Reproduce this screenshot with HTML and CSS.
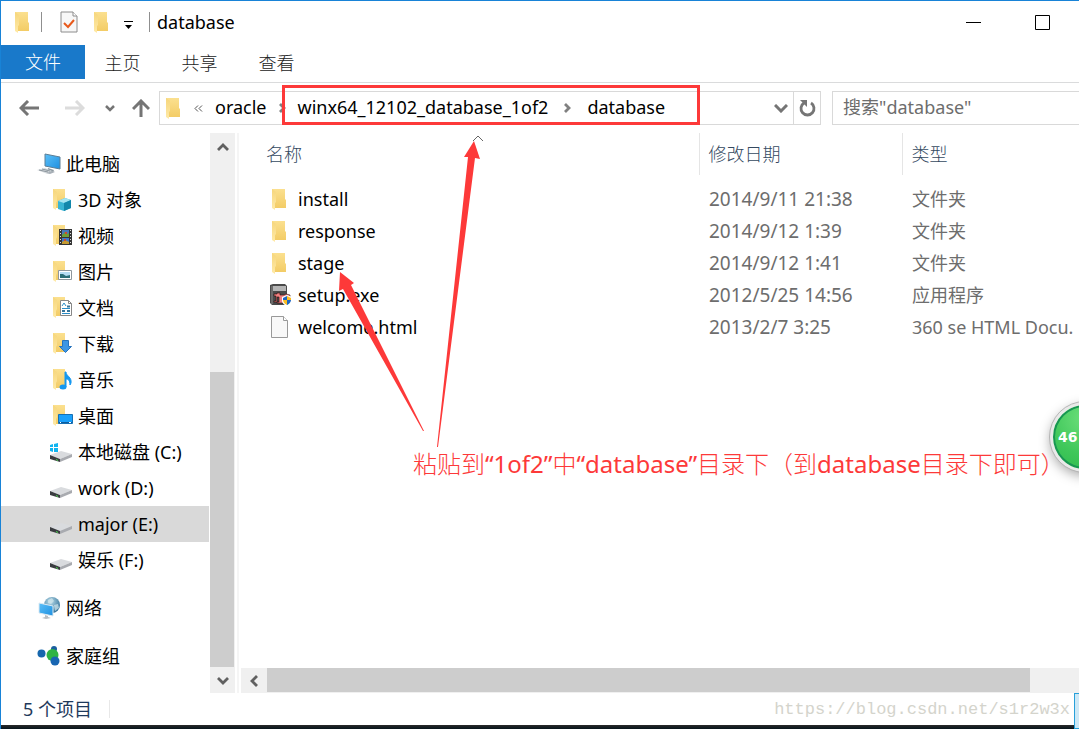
FILE: index.html
```html
<!DOCTYPE html>
<html lang="zh-CN">
<head>
    <meta charset="UTF-8">
    <meta name="viewport" content="width=device-width, initial-scale=1.0">
    <title>database</title>
    <link rel="stylesheet" href="styles.css">
</head>
<body>
    <svg class="defs" aria-hidden="true">
        <defs>
            <linearGradient id="gBack" x1="0" y1="0" x2="0" y2="1">
                <stop offset="0" stop-color="#fbe08f"/><stop offset="1" stop-color="#f3cc66"/>
            </linearGradient>
            <linearGradient id="gFront" x1="0" y1="0" x2="0" y2="1">
                <stop offset="0" stop-color="#f6d67c"/><stop offset="1" stop-color="#ffeaa8"/>
            </linearGradient>
            <linearGradient id="gScreen" x1="0" y1="0" x2="1" y2="1">
                <stop offset="0" stop-color="#5cc0f8"/><stop offset="1" stop-color="#1e8fe0"/>
            </linearGradient>
            <radialGradient id="gGlobe" cx="0.4" cy="0.3" r="0.8">
                <stop offset="0" stop-color="#b9dcea"/><stop offset="1" stop-color="#23658f"/>
            </radialGradient>
            <symbol id="folder" viewBox="0 0 16 22">
                <path d="M1 1h13v10l1 1v8H1z" fill="url(#gBack)"/>
                <path d="M1 1l4 3v10l-1 1v7l-3-2z" fill="url(#gFront)"/>
            </symbol>
            <symbol id="half" viewBox="0 0 24 24">
                <path d="M4 1h12v19H4z" fill="url(#gBack)"/>
                <path d="M4 1l4 3v9l-1 2v7l-3-2z" fill="url(#gFront)"/>
            </symbol>
            <symbol id="drive" viewBox="0 0 24 24">
                <path d="M1 15l11-4 11 3-12 5z" fill="#d9dbde"/>
                <path d="M1 15l10 4v3L1 19z" fill="#3a3c40"/>
                <path d="M11 19l12-5v3l-12 5z" fill="#a9abb0"/>
                <path d="M7 19l2 1v1l-2-1z" fill="#4bd84b"/>
            </symbol>
        </defs>
    </svg>

    <div class="window">
        <header class="titlebar">
            <svg class="folder"><use href="#folder"/></svg>
            <i class="sep first"></i>
            <button class="quick" aria-label="属性">
                <svg width="18" height="22" viewBox="0 0 18 22">
                    <path d="M1 1h12l4 4v16H1z" fill="#f7f7f7" stroke="#8c8c8c"/>
                    <path d="M13 1v4h4" fill="#fff" stroke="#8c8c8c"/>
                    <path d="M4 12l4 4 6-7" fill="none" stroke="#e8591b" stroke-width="2"/>
                </svg>
            </button>
            <button class="quick second" aria-label="新建文件夹"><svg class="folder"><use href="#folder"/></svg></button>
            <button class="quick more" aria-label="自定义快速访问工具栏">
                <svg width="10" height="9" viewBox="0 0 10 9"><path d="M0 0h9v1H0zM1 4h7L4.500 8z" fill="#000"/></svg>
            </button>
            <i class="sep"></i>
            <h1>database</h1>
            <div class="controls">
                <button aria-label="最小化"><svg width="15" height="15"><path d="M0 7h15v1H0z"/></svg></button>
                <button aria-label="最大化"><svg width="15" height="15"><path d="M.5.5h14v14H.5z" fill="none" stroke="#000"/></svg></button>
            </div>
        </header>

        <nav class="tabs">
            <button class="file">文件</button>
            <button>主页</button>
            <button>共享</button>
            <button>查看</button>
        </nav>

        <div class="navbar">
            <button class="go" aria-label="后退"><svg width="20" height="16" viewBox="0 0 20 16"><path d="M20 8H2M9 1L2 8l7 7" fill="none" stroke="#757575" stroke-width="3"/></svg></button>
            <button class="go" aria-label="前进"><svg width="20" height="16" viewBox="0 0 20 16"><path d="M0 8h18M11 1l7 7-7 7" fill="none" stroke="#dcdcdc" stroke-width="3"/></svg></button>
            <button class="recent" aria-label="最近位置"><svg width="10" height="7" viewBox="0 0 10 7"><path d="M1 1l4 4 4-4" fill="none" stroke="#757575" stroke-width="2.500"/></svg></button>
            <button class="up" aria-label="上移"><svg width="18" height="18" viewBox="0 0 18 18"><path d="M9 18V2M1 10l8-8 8 8" fill="none" stroke="#757575" stroke-width="3"/></svg></button>
            <div class="address">
                <svg class="folder"><use href="#folder"/></svg>
                <button class="crumb-sep back" aria-label="上级"><svg width="9" height="7" viewBox="0 0 9 7"><path d="M4 .5l-3 3 3 3M8 .5l-3 3 3 3" fill="none" stroke="#555"/></svg></button>
                <a href="#">oracle</a>
                <span class="crumb-sep"><svg width="7" height="10" viewBox="0 0 7 10"><path d="M1 1l4 4-4 4" fill="none" stroke="#808080" stroke-width="2.800"/></svg></span>
                <a href="#">winx64_12102_database_1of2</a>
                <span class="crumb-sep last"><svg width="7" height="10" viewBox="0 0 7 10"><path d="M1 1l4 4-4 4" fill="none" stroke="#808080" stroke-width="2.800"/></svg></span>
                <a href="#">database</a>
                <button class="drop" aria-label="历史"><svg width="14" height="9" viewBox="0 0 14 9"><path d="M1 1l6 6 6-6" fill="none" stroke="#757575" stroke-width="3"/></svg></button>
                <button class="refresh" aria-label="刷新">
                    <svg width="17" height="18" viewBox="0 0 17 18"><path d="M12 4a6.500 6.500 0 1 1-7 0" fill="none" stroke="#757575" stroke-width="2.800"/><path d="M1 1h7v7l-2.500-2.500z" fill="#757575"/></svg>
                </button>
            </div>
            <input class="search" type="text" placeholder='搜索"database"' aria-label="搜索">
        </div>

        <div class="main">
            <nav class="tree">
                <ul>
                    <li><a class="root" href="#"><svg viewBox="0 0 24 24">
                        <path d="M8 2l15 3v12L8 14z" fill="url(#gScreen)" stroke="#5d7f96"/>
                        <path d="M11 16l6 2-1 2-6-1z" fill="#8c98a0"/>
                        <path d="M0 18l8-2 7 3-7 2z" fill="#d5dade"/><path d="M8 21l8-2 2 1-5 2z" fill="#a8b0b7"/>
                        <path d="M2 18l9 2M5 17l8 2" stroke="#8d969d"/></svg>此电脑</a></li>
                    <li><a href="#"><svg viewBox="0 0 24 24"><use href="#half"/>
                        <path d="M9 13l7-3 6 2v8l-7 3-6-2z" fill="#39b5d4"/><path d="M9 13l7-3 6 2-7 3z" fill="#a4e4f1"/><path d="M15 15l7-3v8l-7 3z" fill="#1287ab"/></svg>3D 对象</a></li>
                    <li><a href="#"><svg viewBox="0 0 24 24"><use href="#half"/>
                        <path d="M10 5h13v16H10z" fill="#353535"/><path d="M13 6h7v7h-7z" fill="#4779ba"/><path d="M13 14h7v6h-7z" fill="#3f78c8"/>
                        <path d="M13 11l3-3 2 2 2-1v4h-7z" fill="#6f9d36"/><path d="M13 18l3-2 4 2v2h-7z" fill="#c59b31"/><path d="M16 8h2v2h-2zM15 15h2v2h-2z" fill="#d0492e"/>
                        <path d="M11.500 6v15M21.500 6v15" stroke="#ddd" stroke-dasharray="1 2"/></svg>视频</a></li>
                    <li><a href="#"><svg viewBox="0 0 24 24"><use href="#half"/>
                        <path d="M9.500 10.500h13v9h-13z" fill="#fff" stroke="#8f979d"/><path d="M11 12h10v6H11z" fill="#b5dcf3"/><path d="M11 14l3 0 3 2 4-1v3H11z" fill="#2c6e77"/></svg>图片</a></li>
                    <li><a href="#"><svg viewBox="0 0 24 24"><use href="#half"/>
                        <path d="M11.500 4.500h8l3 3v12h-11z" fill="#fff" stroke="#878787"/><path d="M19.500 4.500v3h3" fill="none" stroke="#878787"/>
                        <path d="M13 10l2-3 2 3M13 12.500h8M13 17.500h8" fill="none" stroke="#2a8dc8"/><path d="M18 10.500h3M13 15h3M18 15h3" stroke="#35759c" stroke-width="2"/></svg>文档</a></li>
                    <li><a href="#"><svg viewBox="0 0 24 24"><use href="#half"/>
                        <path d="M13.500 8.500h6v6h3l-6 6-6-6h3z" fill="#3c96e4" stroke="#2673bd"/></svg>下载</a></li>
                    <li><a href="#"><svg viewBox="0 0 24 24"><use href="#half"/>
                        <path d="M16 4h1c0 4 6 5 5 11l-1 2c0-5-2-6-4-6v8h-1z" fill="#1598f0" stroke="#1598f0"/><ellipse cx="14" cy="19" rx="3.500" ry="2.500" fill="#1598f0"/></svg>音乐</a></li>
                    <li><a href="#"><svg viewBox="0 0 24 24"><use href="#half"/>
                        <path d="M9.500 10.500h14v9h-14z" fill="#1aa0fb" stroke="#1670b4"/><path d="M10 18h13v1H10z" fill="#0c5b9c"/><path d="M11 18.500h1M20 18.500h2" stroke="#fff"/></svg>桌面</a></li>
                    <li><a href="#"><svg viewBox="0 0 24 24"><use href="#drive"/>
                        <path d="M1 5l3-1v3H1zM5 4l4-1v4H5zM1 8h3v4l-3-1zM5 8h4v4H5z" fill="#10b4f0"/></svg>本地磁盘 (C:)</a></li>
                    <li><a href="#"><svg viewBox="0 0 24 24"><use href="#drive"/></svg>work (D:)</a></li>
                    <li><a class="selected" href="#"><svg viewBox="0 0 24 24"><use href="#drive"/></svg>major (E:)</a></li>
                    <li><a href="#"><svg viewBox="0 0 24 24"><use href="#drive"/></svg>娱乐 (F:)</a></li>
                    <li class="group"><a class="root" href="#"><svg viewBox="0 0 24 24">
                        <circle cx="15" cy="9" r="8" fill="url(#gGlobe)"/><path d="M11 4l4-2 2 3-3 3-3-1zM17 9l4-1 1 4-4 3z" fill="#d3e7ed" opacity=".7"/>
                        <path d="M2 7l14 3v10L2 17z" fill="url(#gScreen)" stroke="#dceaf3"/><path d="M8 19l3 1v1l3 1-5 1-4-1 3-1z" fill="#b8bec3"/></svg>网络</a></li>
                    <li class="group"><a class="root" href="#"><svg viewBox="0 0 24 24">
                        <circle cx="17" cy="5" r="3" fill="#1a5f9e"/><circle cx="4.500" cy="9.500" r="4" fill="#1767ad"/><circle cx="15.500" cy="11" r="6" fill="#2fb344"/><circle cx="18" cy="17" r="4.500" fill="#1966b2"/></svg>家庭组</a></li>
                </ul>
            </nav>
            <div class="vscroll">
                <button aria-label="向上滚动"><svg width="12" height="8" viewBox="0 0 12 8"><path d="M1 7l5-5 5 5" fill="none" stroke="#606060" stroke-width="2.800"/></svg></button>
                <div class="track"><div class="thumb"></div></div>
                <button aria-label="向下滚动"><svg width="12" height="8" viewBox="0 0 12 8"><path d="M1 1l5 5 5-5" fill="none" stroke="#606060" stroke-width="2.800"/></svg></button>
            </div>

            <section class="content">
                <table>
                    <colgroup><col class="name"><col class="date"><col></colgroup>
                    <thead>
                        <tr>
                            <th>名称<svg class="sorted" width="12" height="7" viewBox="0 0 12 7"><path d="M1 6l5-5 5 5" fill="none" stroke="#666"/></svg></th>
                            <th>修改日期</th>
                            <th>类型</th>
                        </tr>
                    </thead>
                    <tbody>
                        <tr><td><div class="entry"><svg class="folder"><use href="#folder"/></svg>install</div></td><td class="time">2014/9/11 21:38</td><td>文件夹</td></tr>
                        <tr><td><div class="entry"><svg class="folder"><use href="#folder"/></svg>response</div></td><td class="time">2014/9/12 1:39</td><td>文件夹</td></tr>
                        <tr><td><div class="entry"><svg class="folder"><use href="#folder"/></svg>stage</div></td><td class="time">2014/9/12 1:41</td><td>文件夹</td></tr>
                        <tr><td><div class="entry"><svg class="app" viewBox="0 0 24 24">
                            <path d="M1 2l3-1h12l2 2v19H3l-2-2z" fill="#4a4a4a"/><path d="M4 3h13v5H4z" fill="#b5b5b5"/><path d="M3 3v18" stroke="#8c8c8c"/>
                            <path d="M5 11h3v-1h3v2h4l2-1 4 1v5h-3l-2-2h-2v4h2v1H8v-1h2v-5H8v5H5v-1h2v-5H5z" fill="#f18080" stroke="#2b0c0c" stroke-width=".6"/>
                            <path d="M13 14l5-2 5 2v4c0 3-5 5-5 5s-5-2-5-5z" fill="#fff"/><path d="M14 15l4-2v4h-4zM18 17h4c0 3-4 5-4 5z" fill="#1e67c4"/><path d="M18 13l4 2v2h-4zM14 17h4v5s-4-2-4-5z" fill="#fbbd22"/></svg>setup.exe</div></td><td class="time">2012/5/25 14:56</td><td>应用程序</td></tr>
                        <tr><td><div class="entry"><svg class="app" viewBox="0 0 24 24">
                            <path d="M2.500 1.500h12l4 4v17h-16z" fill="#f8f8f8" stroke="#999"/><path d="M14.500 1.500v4h4" fill="#fff" stroke="#999"/></svg>welcome.html</div></td><td class="time">2013/2/7 3:25</td><td>360 se HTML Docu.</td></tr>
                    </tbody>
                </table>
                <div class="hscroll">
                    <button aria-label="向左滚动"><svg width="8" height="12" viewBox="0 0 8 12"><path d="M7 1L2 6l5 5" fill="none" stroke="#606060" stroke-width="2.800"/></svg></button>
                    <div class="thumb"></div>
                </div>
            </section>
        </div>

        <footer class="status"><span>5 个项目</span></footer>
        <div class="taskbar"></div>

        <!-- notes drawn over the window -->
        <div class="frame"></div>
        <svg class="arrows" width="160" height="312" viewBox="0 0 160 312">
            <path d="M103 310L134 20h-4L140 4l6 18-5-1-37 289z" fill="#fd3939"/>
            <path d="M89 294L9 152l-4 2 1-19 14 11-3 2 73 146z" fill="#fd3939"/>
        </svg>
        <p class="note">粘贴到<span>“1of2”</span>中<span>“database”</span>目录下（到<span>database</span>目录下即可）</p>
        <div class="ball">46</div>
        <div class="watermark">https://blog.csdn.net/s1r2w3x</div>
        <div class="corner"></div>
    </div>
</body>
</html>
```
FILE: styles.css
```css
* { box-sizing: border-box; }
body {
    margin: 0;
    font-family: "Noto Sans", "Noto Sans CJK SC", sans-serif;
    font-size: 18px;
    line-height: 24px;
    color: #000;
    background: #fff;
}
button {
    display: flex;
    align-items: center;
    justify-content: center;
    padding: 0;
    border: 0;
    background: none;
    font: inherit;
    color: inherit;
}
a { color: inherit; text-decoration: none; }
svg { flex: none; display: block; }
.defs { position: absolute; width: 0; height: 0; }
.folder { width: 16px; height: 22px; }

.window {
    position: relative;
    display: flex;
    flex-direction: column;
    min-height: 100vh;
    overflow: hidden;
    border-top: 1px solid #1883d7;
    border-left: 1px solid #1883d7;
}

/* title bar */
.titlebar { display: flex; align-items: center; height: 44px; padding: 0 0 2px 13px; }
.titlebar h1 { margin: 0; padding-left: 7px; font-size: 18px; font-weight: 400; }
.sep { width: 1px; height: 20px; background: #8f8f8f; }
.sep.first { margin: 0 17px 0 11px; }
.quick { width: 20px; }
.quick.second { margin: 0 12px; }
.quick.more { width: 12px; margin-right: 14px; padding-top: 6px; }
.controls { display: flex; margin-left: auto; padding-right: 2px; }
.controls button { width: 69px; height: 42px; }

.tabs {
    display: flex;
    height: 38px;
    padding-bottom: 3px;
    border-bottom: 1px solid #dadbdc;
    color: #222;
    font-weight: 300;
}
.tabs button { width: 77px; padding-top: 2px; }
.tabs .file { width: 84px; padding: 0; background: #1979ca; color: #fff; }
.file + button { margin-left: -1px; }

/* back, forward and the address */
.navbar { display: flex; align-items: center; padding: 8px 0; }
.go { width: 46px; height: 34px; }
.go:first-child { margin-left: 5px; }
.recent { width: 24px; height: 34px; }
.up { width: 37px; height: 34px; }
.address {
    display: flex;
    align-items: center;
    flex: 29;
    height: 34px;
    margin-right: 11px;
    padding-left: 5px;
    border: 1px solid #d9d9d9;
    white-space: nowrap;
}
.address a { padding-bottom: 2px; }
.crumb-sep { display: flex; justify-content: center; width: 31px; }
.crumb-sep.back { width: 34px; }
.crumb-sep.last { width: 39px; }
.drop { width: 24px; margin-left: auto; }
.refresh { width: 27px; height: 32px; border-left: 1px solid #d9d9d9; }
.search {
    flex: 10;
    min-width: 0;
    height: 34px;
    padding: 0 10px 2px;
    border: 1px solid #d9d9d9;
    border-right: 0;
    font: inherit;
}
.search::placeholder { color: #6d6d6d; opacity: 1; }

.main { display: flex; flex: 1; }
.tree { width: 209px; padding-top: 13px; }
.tree ul { margin: 0; padding: 0; list-style: none; }
.tree a { display: flex; align-items: center; gap: 5px; height: 36px; padding-left: 48px; white-space: nowrap; }
.tree a.root { padding-left: 36px; }
.tree a.selected { margin-right: 1px; background: #d9d9d9; }
.tree svg { width: 24px; height: 24px; }
.group { margin-top: 12px; }

/* scroll bars */
.vscroll { display: flex; flex-direction: column; width: 25px; background: #f0f0f0; }
.vscroll button { height: 26px; padding-top: 2px; }
.vscroll .track { display: flex; flex: 1; align-items: flex-end; }
.vscroll .thumb { width: 24px; height: 58%; background: #cdcdcd; }
.hscroll { display: flex; height: 25px; margin-top: auto; background: #f0f0f0; }
.hscroll button { width: 26px; }
.hscroll .thumb { width: 91%; height: 24px; background: #cdcdcd; }

/* file list */
.content {
    display: flex;
    flex: 1;
    flex-direction: column;
    min-width: 0;
    margin-left: 2px;
    padding-left: 2px;
    border-left: 2px solid #f5f5f5;
}
table { width: 100%; border-collapse: collapse; table-layout: fixed; color: #6d6d6d; }
.name { width: 458px; }
.date { width: 203px; }
th {
    position: relative;
    height: 42px;
    padding: 0 0 0 9px;
    border-left: 1px solid #e5e5e5;
    font-weight: 300;
    text-align: left;
    color: #34495f;
}
th:first-child { padding-left: 25px; border-left: 0; }
.sorted { position: absolute; top: 2px; left: 50%; margin-left: 2px; }
tbody::before { content: ""; display: block; height: 8px; }
td { height: 32px; padding: 0 0 0 10px; white-space: nowrap; overflow: hidden; }
td:first-child { padding-left: 28px; color: #000; }
.time { font-size: 19px; }
.entry { display: flex; align-items: center; }
.entry .folder { margin: 0 11px 0 2px; }
.entry .app { width: 24px; height: 24px; margin-right: 5px; }

.status { display: flex; align-items: center; height: 32px; padding-left: 22px; color: #1e395b; }
.status span { padding-right: 17px; border-right: 1px solid #e8e8e8; line-height: 18px; }
.taskbar { height: 4px; background: linear-gradient(#2a2a2a, #06141c); }

/* notes */
.frame { position: absolute; left: 281px; top: 84px; width: 418px; height: 40px; border: 3px solid #fd3939; }
.arrows { position: absolute; left: 333px; top: 136px; }
.note {
    position: absolute;
    left: 412px;
    top: 447px;
    margin: 0;
    font-size: 24px;
    line-height: 32px;
    font-weight: 300;
    color: #fd3939;
    white-space: nowrap;
}
.note span { font-weight: 400; }
.ball {
    position: absolute;
    left: 1049px;
    top: 401px;
    width: 70px;
    height: 70px;
    padding-left: 5px;
    border: 3px solid #e9e9e9;
    border-radius: 50%;
    outline: 1px solid #b5b5b5;
    background: radial-gradient(circle at 50% 20%, #6ddf7b, #3fc75a 60%, #2fba4c);
    box-shadow: 0 4px 12px #aaa, inset 0 0 0 2px #189553;
    font-family: "DejaVu Sans", sans-serif;
    font-size: 14px;
    font-weight: 700;
    line-height: 64px;
    color: #fff;
}
.watermark {
    position: absolute;
    right: 9px;
    bottom: 7px;
    font-family: "Liberation Mono", monospace;
    font-size: 17px;
    color: #d4d4cc;
}
.corner { position: absolute; right: 0; bottom: 0; width: 5px; height: 36px; border: 1px solid #26a0da; border-right: 0; background: #cce8f6; }
```
